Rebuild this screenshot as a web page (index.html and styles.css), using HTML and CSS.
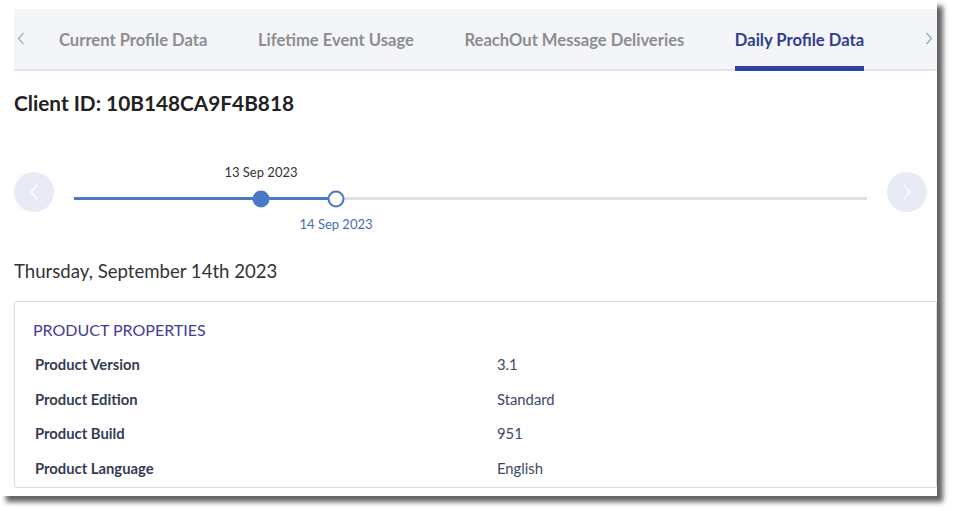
FILE: index.html
```html
<!DOCTYPE html>
<html>
<head>
<meta charset="utf-8">
<link rel="stylesheet" href="styles.css">
</head>
<body>
<div class="frame">
  <nav class="tabbar">
    <span class="tab-arrow left"><svg width="8" height="13" viewBox="0 0 8 13"><path d="M6.5 1 L1.5 6.5 L6.5 12" fill="none" stroke="#a9abb3" stroke-width="1.2"/></svg></span>
    <div class="tabs">
      <span class="tab">Current Profile Data</span>
      <span class="tab">Lifetime Event Usage</span>
      <span class="tab">ReachOut Message Deliveries</span>
      <span class="tab active">Daily Profile Data</span>
    </div>
    <span class="tab-arrow right"><svg width="8" height="13" viewBox="0 0 8 13"><path d="M1.5 1 L6.5 6.5 L1.5 12" fill="none" stroke="#8fa2cc" stroke-width="1.2"/></svg></span>
  </nav>

  <h1 class="client-id">Client ID: 10B148CA9F4B818</h1>

  <section class="timeline">
    <button class="circle-btn"><svg width="10" height="16" viewBox="0 0 10 16"><path d="M8 1 L2 8 L8 15" fill="none" stroke="#fff" stroke-width="1.4"/></svg></button>
    <div class="track-area">
      <div class="track">
        <div class="track-fill" style="width:33.04%"></div>
        <span class="dot filled" style="left:23.58%"></span>
        <span class="dot hollow" style="left:33.04%"></span>
        <span class="dot-label above" style="left:23.58%">13 Sep 2023</span>
        <span class="dot-label below" style="left:33.04%">14 Sep 2023</span>
      </div>
    </div>
    <button class="circle-btn"><svg width="10" height="16" viewBox="0 0 10 16"><path d="M2 1 L8 8 L2 15" fill="none" stroke="#fff" stroke-width="1.4"/></svg></button>
  </section>

  <h2 class="date-heading">Thursday, September 14th 2023</h2>

  <section class="card">
    <h3 class="card-title">PRODUCT PROPERTIES</h3>
    <dl class="props">
      <dt>Product Version</dt><dd>3.1</dd>
      <dt>Product Edition</dt><dd>Standard</dd>
      <dt>Product Build</dt><dd>951</dd>
      <dt>Product Language</dt><dd>English</dd>
    </dl>
  </section>
</div>
</body>
</html>
```

FILE: styles.css
```css
html, body {
  margin: 0;
  padding: 0;
  background: #ffffff;
}
body {
  font-family: "Source Sans Pro", "Lato", "Noto Sans", sans-serif;
  color: #333;
  min-height: 511px;
}
.frame {
  width: 923px;
  height: 487px;
  padding: 9px 0 0 14px;
  background: #fff;
  box-shadow: 6px 6px 5px rgba(0, 0, 0, 0.62);
  display: flex;
  flex-direction: column;
  overflow: hidden;
}
.tabbar {
  height: 62px;
  flex: none;
  background: #f4f5f9;
  box-shadow: inset 0 -2px 0 #e2e4ea;
  display: flex;
  align-items: stretch;
  position: relative;
}
.tab-arrow {
  display: flex;
  align-items: center;
  padding-bottom: 3px;
}
.tab-arrow.left {
  width: 45px;
  padding-left: 3px;
  box-sizing: border-box;
}
.tab-arrow.right {
  margin-left: auto;
  padding-right: 4px;
}
.tabs {
  display: flex;
  gap: 50.5px;
}
.tab {
  display: flex;
  align-items: center;
  font-size: 16.6px;
  font-weight: 700;
  color: #8d8d8f;
  box-sizing: border-box;
  padding-top: 4px;
  border-bottom: 5px solid transparent;
  white-space: nowrap;
}
.tab.active {
  color: #2f3e8e;
  border-bottom-color: #2e45a0;
}
.client-id {
  margin: 20px 0 0 0;
  font-size: 20.8px;
  font-weight: 700;
  color: #222;
  line-height: 24px;
}
.timeline {
  margin-top: 57px;
  display: flex;
  align-items: flex-start;
  padding-right: 10px;
  flex: none;
}
.circle-btn {
  width: 40px;
  height: 40px;
  border-radius: 50%;
  background: #e6ebf5;
  border: none;
  padding: 0;
  display: flex;
  align-items: center;
  justify-content: center;
  flex: none;
}
.track-area {
  flex: 1;
  margin: 0 20px;
  padding-top: 25px;
}
.track {
  position: relative;
  height: 3px;
  background: #e0e0e0;
}
.track-fill {
  height: 3px;
  background: #4a78c5;
}
.dot {
  position: absolute;
  top: 1.5px;
  width: 17px;
  height: 17px;
  border-radius: 50%;
  transform: translate(-50%, -50%);
  box-sizing: border-box;
}
.dot.filled {
  background: #4a78c5;
}
.dot.hollow {
  background: #fff;
  border: 2px solid #4a78c5;
}
.dot-label {
  position: absolute;
  transform: translateX(-50%);
  font-size: 13px;
  white-space: nowrap;
  line-height: 16px;
}
.dot-label.above {
  top: -33px;
  color: #333;
}
.dot-label.below {
  top: 19px;
  color: #4a6db5;
}
.date-heading {
  margin: 47px 0 0 0;
  font-size: 18.6px;
  font-weight: 400;
  color: #333;
  line-height: 24px;
}
.card {
  margin-top: 18px;
  height: 187px;
  flex: none;
  box-sizing: border-box;
  border: 1px solid #dcdcdc;
  border-radius: 2px;
  padding: 17px 20px 0 18px;
}
.card-title {
  margin: 0;
  font-size: 16px;
  font-weight: 400;
  color: #3f3c95;
  line-height: 22px;
}
.props {
  margin: 13px 0 0 0;
  display: grid;
  grid-template-columns: 462px 1fr;
  row-gap: 14px;
  padding-left: 2px;
}
.props dt {
  font-size: 14.8px;
  font-weight: 700;
  color: #363c52;
  line-height: 20.7px;
}
.props dd {
  margin: 0;
  font-size: 14.8px;
  color: #3d4868;
  line-height: 20.7px;
}
```
